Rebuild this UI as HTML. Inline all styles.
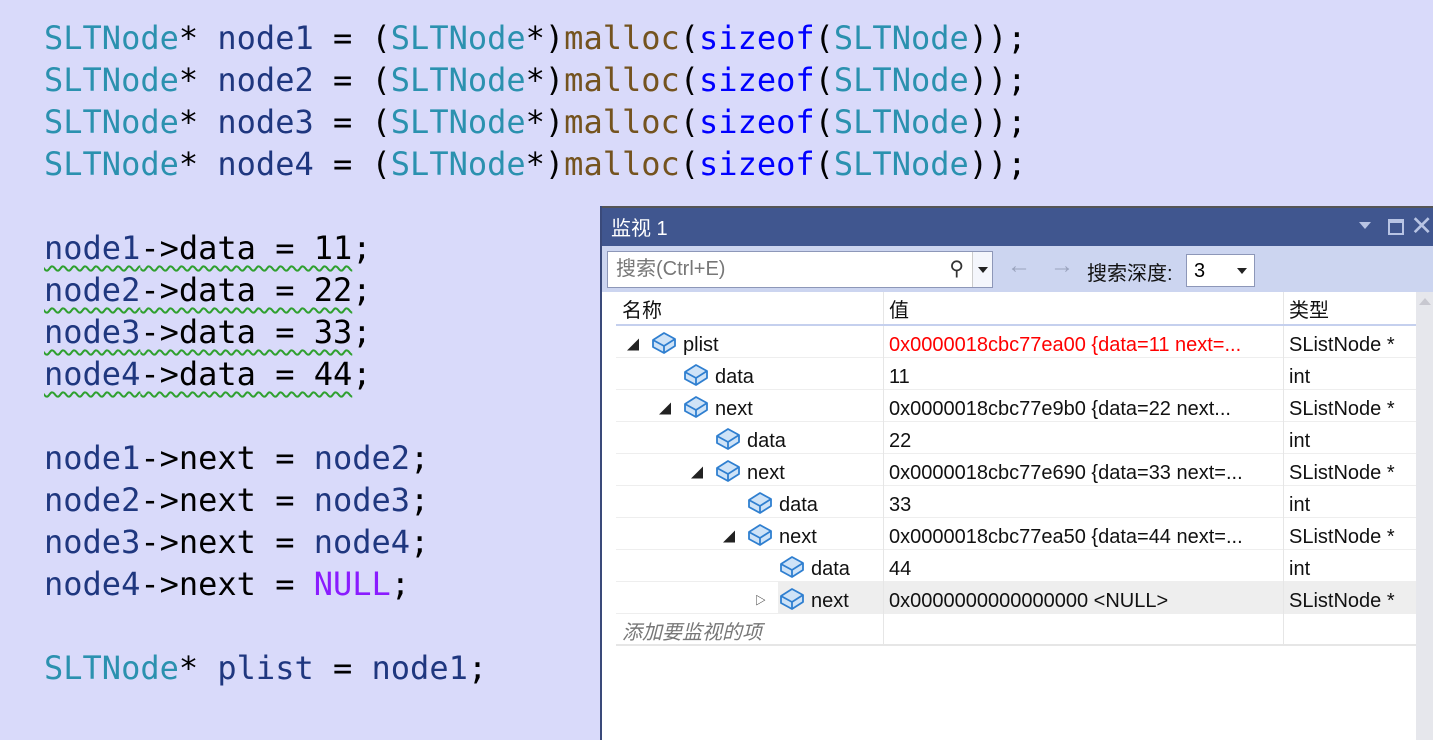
<!DOCTYPE html>
<html><head><meta charset="utf-8"><style>
*{margin:0;padding:0;box-sizing:border-box}
body{width:1433px;height:740px;background:#d9dafa;overflow:hidden;position:relative;font-family:"Liberation Sans","Noto Sans CJK SC",sans-serif}
.code{position:absolute;left:44px;top:17px;font-family:"DejaVu Sans Mono","Liberation Mono",monospace;font-size:32px;line-height:42px;color:#000;white-space:pre}
.t{color:#2b91af}.v{color:#1f377f}.f{color:#74531f}.k{color:#0000ff}.m{color:#8a1bff}
.sq{text-decoration:underline wavy #2fa02f;text-decoration-thickness:1.5px;text-underline-offset:6px}
.win{position:absolute;left:600px;top:206px;width:833px;height:534px;background:#fff;border-left:2px solid #3a4a7a}
.title{height:40px;background:#40568f;color:#fff;font-size:20px;line-height:42px;padding-left:9px;border-top:2px solid #555}
.tb{height:46px;background:#ccd5f0;position:relative}
.search{position:absolute;left:5px;top:5px;width:386px;height:37px;background:#fff;border:1px solid #8d97b8;color:#777;font-size:20px;line-height:34px;padding-left:8px}
.search .dd{position:absolute;right:0;top:0;width:20px;height:35px;border-left:1px solid #ccc;background:#f4f6fc}
.grid{position:absolute;left:14px;top:86px;width:800px}
.row{height:32px;border-bottom:1px solid #eee;position:relative;font-size:20px;line-height:32px;color:#111}
.row>div{position:absolute;top:0;height:32px;overflow:hidden;white-space:nowrap;padding-top:3px}
.c1{left:0;width:268px;border-right:1px solid #e6e6e6}
.c2{left:268px;width:400px;padding-left:5px;border-right:1px solid #e6e6e6}
.c3{left:668px;width:134px;padding-left:5px}
.hd{border-bottom:2px solid #c5d0ee;height:34px}
.ic{position:absolute;top:4px}
.tri{position:absolute;top:3px;font-size:12px;color:#222}
.sb{position:absolute;left:814px;top:86px;width:19px;height:448px;background:#e6e7ec}
</style></head><body>
<div class="code"><span class="t">SLTNode</span>* <span class="v">node1</span> = (<span class="t">SLTNode</span>*)<span class="f">malloc</span>(<span class="k">sizeof</span>(<span class="t">SLTNode</span>));
<span class="t">SLTNode</span>* <span class="v">node2</span> = (<span class="t">SLTNode</span>*)<span class="f">malloc</span>(<span class="k">sizeof</span>(<span class="t">SLTNode</span>));
<span class="t">SLTNode</span>* <span class="v">node3</span> = (<span class="t">SLTNode</span>*)<span class="f">malloc</span>(<span class="k">sizeof</span>(<span class="t">SLTNode</span>));
<span class="t">SLTNode</span>* <span class="v">node4</span> = (<span class="t">SLTNode</span>*)<span class="f">malloc</span>(<span class="k">sizeof</span>(<span class="t">SLTNode</span>));

<span class="sq"><span class="v">node1</span>-&gt;data = 11</span>;
<span class="sq"><span class="v">node2</span>-&gt;data = 22</span>;
<span class="sq"><span class="v">node3</span>-&gt;data = 33</span>;
<span class="sq"><span class="v">node4</span>-&gt;data = 44</span>;

<span class="v">node1</span>-&gt;next = <span class="v">node2</span>;
<span class="v">node2</span>-&gt;next = <span class="v">node3</span>;
<span class="v">node3</span>-&gt;next = <span class="v">node4</span>;
<span class="v">node4</span>-&gt;next = <span class="m">NULL</span>;

<span class="t">SLTNode</span>* <span class="v">plist</span> = <span class="v">node1</span>;</div>

<svg width="0" height="0" style="position:absolute"><defs><g id="cube"><path d="M2 10 L13 3 L24 9 L24 16 L13 23 L2 17 Z" fill="#cfe3f7" stroke="#2f7fd0" stroke-width="1.8" stroke-linejoin="round"/><path d="M2 10 L13 16 L24 9 M13 16 L13 23" fill="none" stroke="#2f7fd0" stroke-width="1.8"/></g></defs></svg>

<div class="win">
<div class="title">监视 1
<span style="position:absolute;right:62px;top:16px;width:0;height:0;border-left:6px solid transparent;border-right:6px solid transparent;border-top:7px solid #b8c4e4"></span>
<span style="position:absolute;right:29px;top:13px;width:16px;height:16px;border:2px solid #b8c4e4;border-top-width:4px"></span>
<span style="position:absolute;right:0;top:-1px;font-size:27px;color:#b8c4e4">✕</span></div>
<div class="tb">
<div class="search">搜索(Ctrl+E)<span style="position:absolute;right:28px;top:0;color:#333;font-size:20px">⚲</span><div class="dd"><span style="position:absolute;left:5px;top:15px;border-left:5px solid transparent;border-right:5px solid transparent;border-top:6px solid #222"></span></div></div>
<span style="position:absolute;left:405px;top:6px;font-size:24px;color:#9aa3bd">←</span>
<span style="position:absolute;left:448px;top:6px;font-size:24px;color:#9aa3bd">→</span>
<span style="position:absolute;left:485px;top:11px;font-size:20px;color:#111">搜索深度:</span>
<div style="position:absolute;left:584px;top:8px;width:69px;height:33px;background:#fff;border:1px solid #8d97b8;font-size:20px;line-height:33px;padding-left:7px">3<span style="position:absolute;left:50px;top:13px;border-left:5px solid transparent;border-right:5px solid transparent;border-top:6px solid #222"></span></div>
</div>
<div class="grid">
<div class="row hd"><div class="c1" style="padding-left:6px">名称</div><div class="c2">值</div><div class="c3">类型</div></div>
<div class="row"><div class="c1"><span class="tri" style="left:11px">◢</span><svg class="ic" style="left:35px" width="26" height="26"><use href="#cube"/></svg><span style="position:absolute;left:67px">plist</span></div><div class="c2" style="color:#f00">0x0000018cbc77ea00 {data=11 next=...</div><div class="c3">SListNode *</div></div>
<div class="row"><div class="c1"><svg class="ic" style="left:67px" width="26" height="26"><use href="#cube"/></svg><span style="position:absolute;left:99px">data</span></div><div class="c2">11</div><div class="c3">int</div></div>
<div class="row"><div class="c1"><span class="tri" style="left:43px">◢</span><svg class="ic" style="left:67px" width="26" height="26"><use href="#cube"/></svg><span style="position:absolute;left:99px">next</span></div><div class="c2">0x0000018cbc77e9b0 {data=22 next...</div><div class="c3">SListNode *</div></div>
<div class="row"><div class="c1"><svg class="ic" style="left:99px" width="26" height="26"><use href="#cube"/></svg><span style="position:absolute;left:131px">data</span></div><div class="c2">22</div><div class="c3">int</div></div>
<div class="row"><div class="c1"><span class="tri" style="left:75px">◢</span><svg class="ic" style="left:99px" width="26" height="26"><use href="#cube"/></svg><span style="position:absolute;left:131px">next</span></div><div class="c2">0x0000018cbc77e690 {data=33 next=...</div><div class="c3">SListNode *</div></div>
<div class="row"><div class="c1"><svg class="ic" style="left:131px" width="26" height="26"><use href="#cube"/></svg><span style="position:absolute;left:163px">data</span></div><div class="c2">33</div><div class="c3">int</div></div>
<div class="row"><div class="c1"><span class="tri" style="left:107px">◢</span><svg class="ic" style="left:131px" width="26" height="26"><use href="#cube"/></svg><span style="position:absolute;left:163px">next</span></div><div class="c2">0x0000018cbc77ea50 {data=44 next=...</div><div class="c3">SListNode *</div></div>
<div class="row"><div class="c1"><svg class="ic" style="left:163px" width="26" height="26"><use href="#cube"/></svg><span style="position:absolute;left:195px">data</span></div><div class="c2">44</div><div class="c3">int</div></div>
<div class="row"><div class="c1"><span class="tri" style="left:139px;font-size:11px">▷</span><div style="position:absolute;left:162px;top:0;width:106px;height:32px;background:#eee"></div><svg class="ic" style="left:163px" width="26" height="26"><use href="#cube"/></svg><span style="position:absolute;left:195px">next</span></div><div class="c2" style="background:#eee">0x0000000000000000 &lt;NULL&gt;</div><div class="c3" style="background:#eee">SListNode *</div></div>
<div class="row" style="border-bottom:2px solid #e6e6e6"><div class="c1" style="padding-left:6px;color:#777;font-style:italic">添加要监视的项</div><div class="c2"></div><div class="c3"></div></div>
</div>
<div class="sb"><span style="position:absolute;left:3px;top:6px;border-left:6px solid transparent;border-right:6px solid transparent;border-bottom:7px solid #c8c8d0"></span></div>
</div>
</body></html>
